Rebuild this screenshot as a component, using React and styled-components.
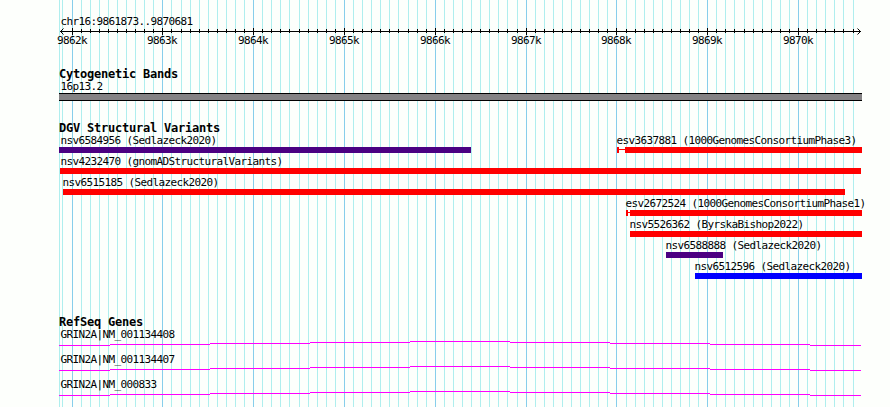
import styled, { createGlobalStyle } from "styled-components";

const PANEL_LEFT = 59;
const PANEL_WIDTH = 803;

//x of the n-th 100bp tick, counted from 9862k
const tickX = (n) => Math.floor(72.02 + n * 9.0819) - PANEL_LEFT;

const ticks = Array.from({ length: 88 }, (_, i) => i - 1).map((n) => ({
  x: tickX(n),
  major: n >= 0 && n % 10 === 0,
  label: `${9862 + n / 10}k`,
}));

const RED = "#ff0000";
const INDIGO = "#4b0082";
const BLUE = "#0000ff";

//start and end are px from the left edge of the panel
const variantRows = [
  [
    { name: "nsv6584956 (Sedlazeck2020)", start: 0, end: 412, color: INDIGO, shift: 1.4 },
    { name: "esv3637881 (1000GenomesConsortiumPhase3)", start: 558, end: 803, color: RED, whisker: 6 },
  ],
  [{ name: "nsv4232470 (gnomADStructuralVariants)", start: 1, end: 802, color: RED, shift: 0.4 }],
  [{ name: "nsv6515185 (Sedlazeck2020)", start: 4, end: 786, color: RED }],
  [{ name: "esv2672524 (1000GenomesConsortiumPhase1)", start: 567, end: 803, color: RED, whisker: 2 }],
  [{ name: "nsv5526362 (ByrskaBishop2022)", start: 571, end: 803, color: RED }],
  [{ name: "nsv6588888 (Sedlazeck2020)", start: 607, end: 664, color: INDIGO }],
  [{ name: "nsv6512596 (Sedlazeck2020)", start: 636, end: 803, color: BLUE }],
];

const genes = ["GRIN2A|NM_001134408", "GRIN2A|NM_001134407", "GRIN2A|NM_000833"];

//[from, to, y]
const intronSteps = [
  [0, 51, 4],
  [51, 151, 3],
  [151, 251, 2],
  [251, 351, 1],
  [351, 451, 0],
  [451, 551, 1],
  [551, 651, 2],
  [651, 751, 3],
  [751, 802, 4],
];

const Grid = () => (
  <GridLines width={PANEL_WIDTH} height="407">
    <rect x="0" y="0" width="1" height="407" fill="#afeeee" />
    {ticks.map((t) => (
      <rect
        key={t.x}
        x={t.x}
        y="0"
        width="1"
        height="407"
        fill={t.major ? "#87ceeb" : "#afeeee"}
      />
    ))}
  </GridLines>
);

const Ruler = () => (
  <RulerSvg width={PANEL_WIDTH} height="19">
    <rect x="1" y="4" width="801" height="1" />
    <path d="M4.5 1.5L1.5 4.5L4.5 7.5M798.5 1.5L801.5 4.5L798.5 7.5" />
    {ticks
      .filter((t) => t.x > 3)
      .map((t) => (
        <rect
          key={t.x}
          x={t.x}
          y={t.major ? 1 : 2}
          width="1"
          height={t.major ? 7 : 4}
        />
      ))}
    {ticks
      .filter((t) => t.major)
      .map((t) => (
        <text key={t.label} x={t.x - 15} y="17">
          {t.label}
        </text>
      ))}
  </RulerSvg>
);

const Feature = ({ item, prevEnd }) => (
  <FeatureWrap $gap={item.start - prevEnd} $width={item.end - item.start}>
    <Label $shift={item.shift ?? -0.6}>{item.name}</Label>
    <Glyph>
      {item.whisker ? (
        <>
          <Cap $color={item.color} />
          <Whisker $color={item.color} $width={item.whisker} />
        </>
      ) : null}
      <Bar $color={item.color} />
    </Glyph>
  </FeatureWrap>
);

const App = () => {
  return (
    <>
      <GlobalStyle />
      <Page>
        <Grid />
        <Panel>
          <Label $shift={1.4}>chr16:9861873..9870681</Label>
          <Ruler />

          <Track $gap={22}>
            <Title>Cytogenetic Bands</Title>
            <Label $shift={1.4}>16p13.2</Label>
            <Band />
          </Track>

          <Track $gap={21}>
            <Title>DGV Structural Variants</Title>
            {variantRows.map((row) => (
              <VariantRow key={row[0].name}>
                {row.map((item, i) => (
                  <Feature
                    key={item.name}
                    item={item}
                    prevEnd={i ? row[i - 1].end : 0}
                  />
                ))}
              </VariantRow>
            ))}
          </Track>

          <Track $gap={35}>
            <Title>RefSeq Genes</Title>
            {genes.map((gene) => (
              <GeneRow key={gene}>
                <Label $shift={1.4}>{gene}</Label>
                <Intron width={PANEL_WIDTH} height="5">
                  {intronSteps.map(([from, to, y]) => (
                    <rect key={from} x={from} y={y} width={to - from} height="1" />
                  ))}
                </Intron>
              </GeneRow>
            ))}
          </Track>
        </Panel>
      </Page>
    </>
  );
};
export default App;

const GlobalStyle = createGlobalStyle`
  body {
    margin: 0;
    background-color: #fdfffc;
  }
`;

const Page = styled.div`
  position: relative;
  box-sizing: border-box;
  width: 890px;
  height: 407px;
  padding: 15px 0 0 ${PANEL_LEFT}px;
  overflow: hidden;
  color: #000;
  font-family: "DejaVu Sans Mono", "Liberation Mono", monospace;
  font-size: 11px;
  letter-spacing: -0.622px;
`;

const GridLines = styled.svg`
  position: absolute;
  top: 0;
  left: ${PANEL_LEFT}px;
  shape-rendering: crispEdges;
`;

const Panel = styled.div`
  position: relative;
  width: ${PANEL_WIDTH}px;
`;

const Track = styled.section`
  padding-top: ${(props) => props.$gap}px;
`;

const Title = styled.div`
  height: 12px;
  line-height: 12px;
  font-size: 12px;
  font-weight: bold;
  letter-spacing: -0.224px;
  white-space: nowrap;
`;

const Label = styled.div`
  height: 12px;
  line-height: 14px;
  margin-left: ${(props) => props.$shift}px;
  white-space: nowrap;
`;

const RulerSvg = styled.svg`
  display: block;
  overflow: visible;
  rect {
    shape-rendering: crispEdges;
  }
  path {
    fill: none;
    stroke: #000;
  }
`;

const Band = styled.div`
  box-sizing: border-box;
  height: 8px;
  margin-top: 1px;
  background-color: #848284;
  border-top: 1px solid #000;
  border-bottom: 1px solid #000;
`;

const VariantRow = styled.div`
  display: flex;
  height: 21px;
`;

const FeatureWrap = styled.div`
  flex: none;
  width: ${(props) => props.$width}px;
  margin-left: ${(props) => props.$gap}px;
`;

const Glyph = styled.div`
  display: flex;
  height: 6px;
  margin-top: 1px;
`;

const Cap = styled.div`
  width: 2px;
  background-color: ${(props) => props.$color};
`;

const Whisker = styled.div`
  width: ${(props) => props.$width}px;
  height: 1px;
  margin-top: 2px;
  background-color: ${(props) => props.$color};
`;

const Bar = styled.div`
  flex: 1;
  background-color: ${(props) => props.$color};
`;

const GeneRow = styled.div`
  height: 25px;
`;

const Intron = styled.svg`
  display: block;
  margin-top: 1px;
  fill: #ff00ff;
  shape-rendering: crispEdges;
`;
